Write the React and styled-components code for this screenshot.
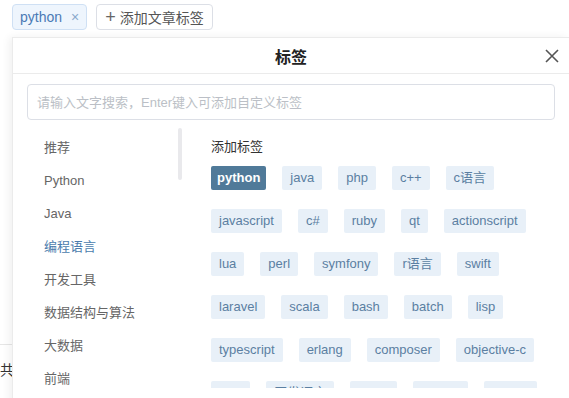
import React from "react"
import styled, { createGlobalStyle } from "styled-components"

const menu = ["推荐", "Python", "Java", "编程语言", "开发工具", "数据结构与算法", "大数据", "前端", "后端"]

const rows = [
  ["python", "java", "php", "c++", "c语言"],
  ["javascript", "c#", "ruby", "qt", "actionscript"],
  ["lua", "perl", "symfony", "r语言", "swift"],
  ["laravel", "scala", "bash", "batch", "lisp"],
  ["typescript", "erlang", "composer", "objective-c"],
  ["julia", "开发语言", "kotlin", "matlab", "fortran"],
]

export default () => (
  <>
    <Global />
    <Page>
      <TopBar>
        <Chip>
          python<ChipClose>×</ChipClose>
        </Chip>
        <AddButton>
          <Plus>+</Plus>添加文章标签
        </AddButton>
      </TopBar>
      <Behind>
        <Rule />
        <BehindText>共</BehindText>
      </Behind>

      <Popup>
        <Header>
          <Title>标签</Title>
          <Close>
            <svg width="14" height="14" viewBox="0 0 14 14">
              <path d="M1 1L13 13M13 1L1 13" stroke="#555" strokeWidth="1.6" fill="none" />
            </svg>
          </Close>
        </Header>
        <SearchWrap>
          <Search placeholder="请输入文字搜索，Enter键入可添加自定义标签" />
        </SearchWrap>
        <Body>
          <Menu>
            {menu.map(m => (
              <MenuItem key={m} $active={m === "编程语言"}>{m}</MenuItem>
            ))}
            <Scrollbar />
          </Menu>
          <Tags>
            <TagsTitle>添加标签</TagsTitle>
            <TagList>
              {rows.flat().map(t => (
                <Tag key={t} $active={t === "python"}>{t}</Tag>
              ))}
            </TagList>
          </Tags>
        </Body>
      </Popup>
    </Page>
  </>
)

const Global = createGlobalStyle`
  body {
    margin: 0;
    background: #fff;
    font-family: "Liberation Sans", "Noto Sans CJK SC", sans-serif;
    overflow: hidden;
  }
`

const Page = styled.div`
  position: relative;
  width: 569px;
  height: 398px;
  overflow: hidden;
`

const TopBar = styled.div`
  display: flex;
  gap: 9px;
  padding: 4px 12px;
`

const Chip = styled.div`
  display: flex;
  align-items: center;
  height: 24px;
  padding: 0 7px 0 7px;
  border: 1px solid #cfe0f4;
  border-radius: 4px;
  background: #eef5fd;
  color: #4a7ab5;
  font-size: 14px;
`

const ChipClose = styled.span`
  margin-left: 9px;
  color: #8aa8cc;
  font-size: 14px;
`

const AddButton = styled.div`
  display: flex;
  align-items: center;
  height: 24px;
  padding: 0 8px 0 8px;
  border: 1px solid #dcdfe6;
  border-radius: 4px;
  background: #fff;
  color: #555;
  font-size: 14px;
`

const Plus = styled.span`
  font-size: 18px;
  color: #666;
  margin-right: 4px;
  line-height: 1;
`

const Behind = styled.div`
  padding-top: 310px;
`

const Rule = styled.div`
  height: 1px;
  background: #e6e6e6;
`

const BehindText = styled.div`
  margin-top: 14px;
  font-size: 14px;
  color: #333;
`

const Popup = styled.div`
  position: absolute;
  left: 12px;
  top: 37px;
  width: 557px;
  height: 380px;
  background: #fff;
  border: 1px solid #ebebeb;
  border-right: none;
  box-sizing: border-box;
  box-shadow: -3px 0 8px rgba(0, 0, 0, 0.06);
  display: flex;
  flex-direction: column;
`

const Header = styled.div`
  position: relative;
  flex: none;
  height: 35px;
  display: flex;
  align-items: center;
  justify-content: center;
  border-bottom: 1px solid #ebebeb;
`

const Title = styled.div`
  font-size: 16px;
  font-weight: 700;
  color: #222;
`

const Close = styled.div`
  position: absolute;
  right: 10px;
  top: 11px;
  display: flex;
`

const SearchWrap = styled.div`
  flex: none;
  padding: 10px 14px 0 14px;
`

const Search = styled.input`
  box-sizing: border-box;
  width: 528px;
  height: 36px;
  padding: 0 9px;
  border: 1px solid #dcdfe6;
  border-radius: 4px;
  font-family: "Liberation Sans", "Noto Sans CJK SC", sans-serif;
  font-size: 13px;
  outline: none;
  &::placeholder {
    color: #bbbfc6;
  }
`

const Body = styled.div`
  flex: none;
  display: flex;
  height: 260px;
  overflow: hidden;
  margin-top: 8px;
`

const Menu = styled.div`
  position: relative;
  width: 175px;
  flex: none;
  padding: 3px 0 0 31px;
  box-sizing: border-box;
`

const MenuItem = styled.div`
  height: 33px;
  line-height: 33px;
  font-size: 13px;
  color: ${p => (p.$active ? "#4b7cad" : "#666")};
`

const Scrollbar = styled.div`
  position: absolute;
  top: 0;
  right: 6px;
  width: 4px;
  height: 52px;
  border-radius: 2px;
  background: #e9e9ec;
`

const Tags = styled.div`
  flex: 1;
  padding: 9px 0 0 23px;
`

const TagsTitle = styled.div`
  font-size: 13px;
  line-height: 20px;
  color: #333;
  margin-bottom: 9px;
`

const TagList = styled.div`
  display: flex;
  flex-wrap: wrap;
  column-gap: 16px;
  row-gap: 19px;
  width: 340px;
`

const Tag = styled.div`
  height: 24px;
  line-height: 24px;
  padding: ${p => (p.$active ? "0 6px" : "0 8px")};
  border-radius: 2px;
  font-size: 13px;
  background: ${p => (p.$active ? "#507a99" : "#e8f0f8")};
  color: ${p => (p.$active ? "#fff" : "#5b7fa2")};
  font-weight: ${p => (p.$active ? 700 : 400)};
`
